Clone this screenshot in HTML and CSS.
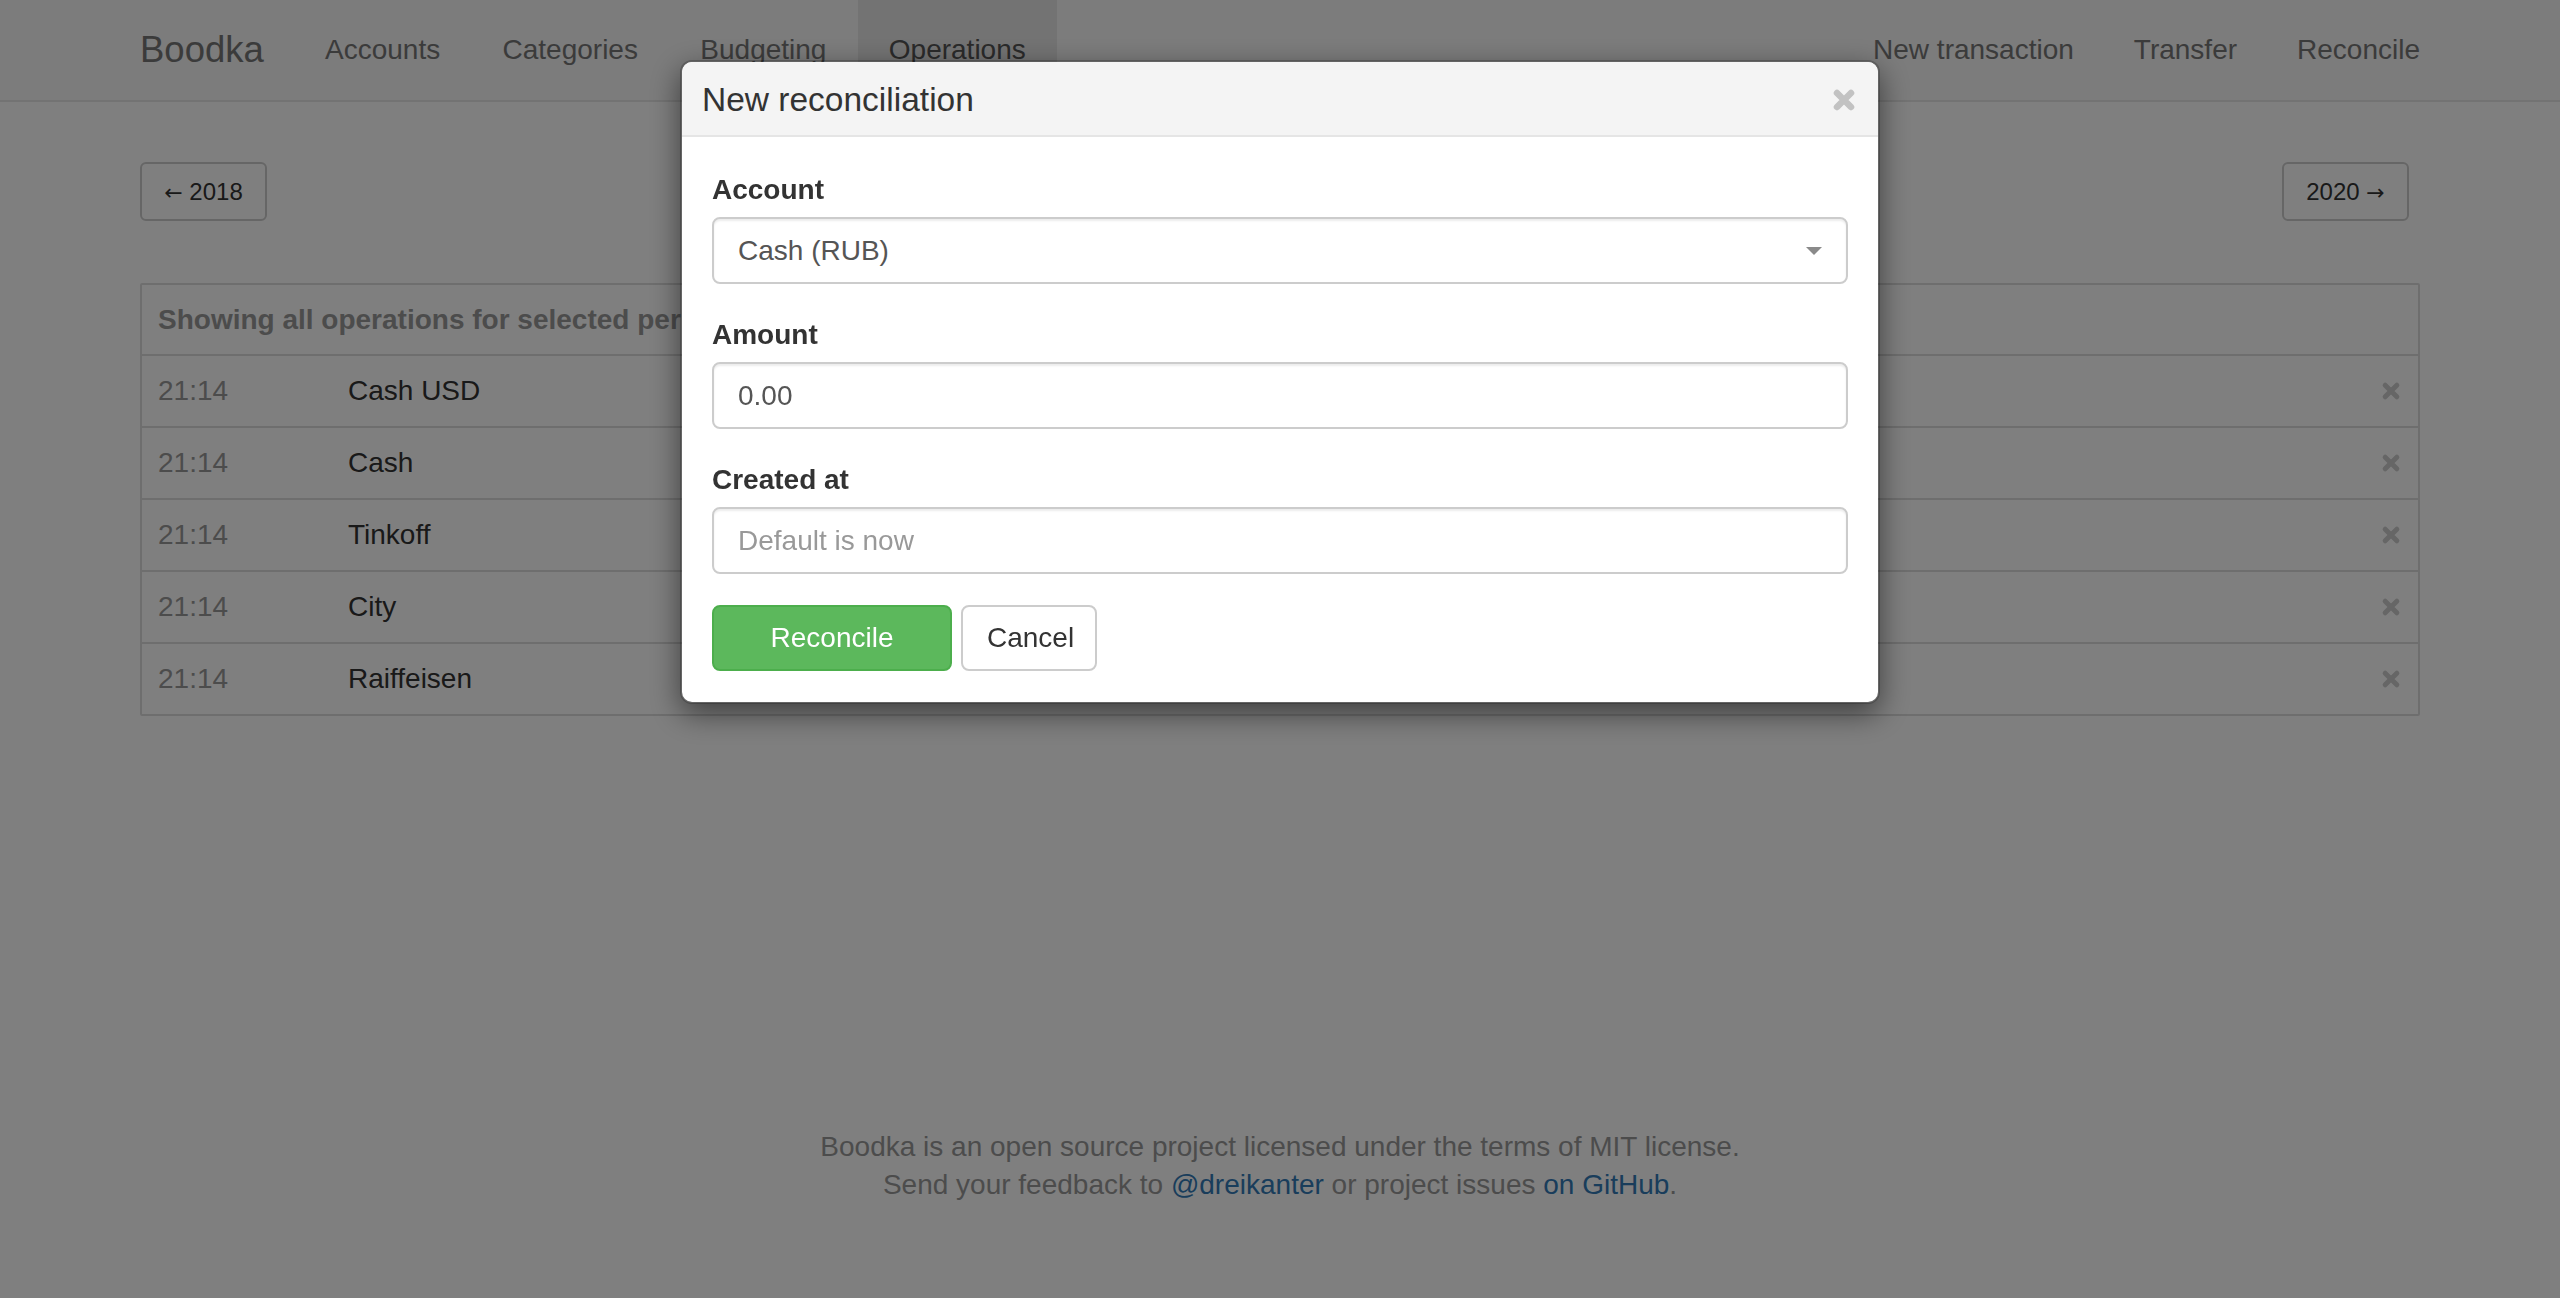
FILE: index.html
```html
<!DOCTYPE html>
<html lang="en">
<head>
<meta charset="utf-8">
<title>Boodka</title>
<link rel="stylesheet" href="styles.css">
</head>
<body>
<nav class="navbar">
  <div class="container nav-inner">
    <a class="brand" href="#">Boodka</a>
    <ul class="nav nav-left">
      <li><a href="#">Accounts</a></li>
      <li><a href="#">Categories</a></li>
      <li><a href="#">Budgeting</a></li>
      <li class="active"><a href="#">Operations</a></li>
    </ul>
    <ul class="nav nav-right">
      <li><a href="#">New transaction</a></li>
      <li><a href="#">Transfer</a></li>
      <li><a href="#">Reconcile</a></li>
    </ul>
  </div>
</nav>

<main class="container page">
  <div class="pager">
    <button class="btn-sm"><span class="arrow">&larr;</span> 2018</button>
    <button class="btn-sm btn-next">2020 <span class="arrow">&rarr;</span></button>
  </div>

  <div class="panel">
    <div class="panel-heading">Showing all operations for selected period</div>
    <div class="op-row"><span class="time">21:14</span><span class="name">Cash USD</span><span class="del"><svg viewBox="0 0 24 24"><path d="M5 5L19 19M19 5L5 19"/></svg></span></div>
    <div class="op-row"><span class="time">21:14</span><span class="name">Cash</span><span class="del"><svg viewBox="0 0 24 24"><path d="M5 5L19 19M19 5L5 19"/></svg></span></div>
    <div class="op-row"><span class="time">21:14</span><span class="name">Tinkoff</span><span class="del"><svg viewBox="0 0 24 24"><path d="M5 5L19 19M19 5L5 19"/></svg></span></div>
    <div class="op-row"><span class="time">21:14</span><span class="name">City</span><span class="del"><svg viewBox="0 0 24 24"><path d="M5 5L19 19M19 5L5 19"/></svg></span></div>
    <div class="op-row"><span class="time">21:14</span><span class="name">Raiffeisen</span><span class="del"><svg viewBox="0 0 24 24"><path d="M5 5L19 19M19 5L5 19"/></svg></span></div>
  </div>
</main>

<footer class="footer">
  <p>Boodka is an open source project licensed under the terms of MIT license.</p>
  <p>Send your feedback to <a href="#">@dreikanter</a> or project issues <a href="#">on GitHub</a>.</p>
</footer>

<div class="backdrop"></div>

<div class="modal-layer">
  <div class="modal">
    <div class="modal-header">
      <h4 class="modal-title">New reconciliation</h4>
      <span class="close"><svg viewBox="0 0 24 24"><path d="M5 5L19 19M19 5L5 19"/></svg></span>
    </div>
    <div class="modal-body">
      <div class="form-group">
        <label class="label">Account</label>
        <div class="select-wrap">
          <div class="form-control">Cash (RUB)</div>
          <span class="caret"></span>
        </div>
      </div>
      <div class="form-group">
        <label class="label">Amount</label>
        <div class="form-control">0.00</div>
      </div>
      <div class="form-group">
        <label class="label">Created at</label>
        <div class="form-control placeholder">Default is now</div>
      </div>
      <div class="actions">
        <button class="btn btn-success">Reconcile</button>
        <button class="btn btn-default">Cancel</button>
      </div>
    </div>
  </div>
</div>
</body>
</html>
```

FILE: styles.css
```css
* { box-sizing: border-box; }

html, body {
  margin: 0;
  padding: 0;
  background: #ffffff;
}

body {
  font-family: "Liberation Sans", Arial, Helvetica, sans-serif;
  font-size: 28px;
  line-height: 40px;
  color: #333333;
  height: 1298px;
  overflow: hidden;
}

a { text-decoration: none; }

.container {
  width: 2280px;
  margin: 0 auto;
}

/* ---------- navbar ---------- */
.navbar {
  background: #f8f8f8;
  border-bottom: 2px solid #e7e7e7;
  height: 102px;
}

.nav-inner {
  display: flex;
  align-items: stretch;
  height: 100px;
}

.brand {
  font-size: 36.5px;
  line-height: 40px;
  color: #777777;
  padding: 30px 30px 30px 0;
  height: 100px;
}

.nav {
  list-style: none;
  margin: 0;
  padding: 0;
  display: flex;
}

.nav li a {
  display: block;
  padding: 30px 30px;
  font-size: 28px;
  line-height: 40px;
  color: #777777;
  height: 100px;
}

.nav-left li a {
  padding: 30px 31.2px;
}

.nav li.active a {
  background: #e7e7e7;
  color: #555555;
}

.nav-right {
  margin-left: auto;
  margin-right: -30px;
}

/* ---------- page ---------- */
.page {
  padding-top: 60px;
}

.pager {
  display: flex;
  justify-content: space-between;
  align-items: center;
}

.btn-sm {
  font-family: inherit;
  font-size: 24px;
  line-height: 36px;
  padding: 10px 0;
  height: 59px;
  width: 127px;
  white-space: nowrap;
  text-align: center;
  border: 2px solid #cccccc;
  border-radius: 6px;
  background: #ffffff;
  color: #333333;
}

.arrow {
  font-family: "DejaVu Sans", sans-serif;
  font-size: 22px;
}

.btn-next {
  margin-right: 11px;
}

.panel {
  margin-top: 62px;
  border: 2px solid #dddddd;
  border-radius: 2px;
}

.panel-heading {
  height: 71px;
  padding: 0 16px;
  display: flex;
  align-items: center;
  font-weight: bold;
  color: #999999;
  border-bottom: 2px solid #dddddd;
}

.op-row {
  display: flex;
  align-items: center;
  height: 72px;
  padding: 0 16px;
  border-bottom: 2px solid #dddddd;
}

.op-row:last-child {
  border-bottom: none;
  height: 70px;
}

.time {
  width: 190px;
  color: #999999;
}

.name {
  flex: 1;
  color: #333333;
}

.del {
  width: 20px;
  height: 20px;
  margin-right: 1px;
  display: flex;
}

.del svg {
  width: 20px;
  height: 20px;
  fill: none;
  stroke: #cccccc;
  stroke-width: 6;
  stroke-linecap: round;
}

/* ---------- footer ---------- */
.footer {
  margin-top: 412px;
  text-align: center;
  color: #999999;
  line-height: 38px;
}

.footer p {
  margin: 0;
}

.footer a {
  color: #337ab7;
}

/* ---------- modal ---------- */
.backdrop {
  position: fixed;
  inset: 0;
  background: rgba(0, 0, 0, 0.5);
}

.modal-layer {
  position: fixed;
  inset: 0;
  display: flex;
  justify-content: center;
  align-items: flex-start;
  padding-top: 60px;
}

.modal {
  width: 1200px;
  background: #ffffff;
  border: 2px solid rgba(0, 0, 0, 0.2);
  border-radius: 12px;
  box-shadow: 0 10px 30px rgba(0, 0, 0, 0.5);
  background-clip: padding-box;
  overflow: hidden;
}

.modal-header {
  background: #f4f4f4;
  border-bottom: 2px solid #e5e5e5;
  height: 75px;
  padding: 0 22px 0 20px;
  display: flex;
  align-items: center;
  justify-content: space-between;
}

.modal-title {
  margin: 2px 0 0;
  font-size: 33.5px;
  font-weight: normal;
  line-height: 40px;
  color: #333333;
}

.close {
  width: 24px;
  height: 24px;
  display: flex;
  margin-top: 2px;
}

.close svg {
  width: 24px;
  height: 24px;
  fill: none;
  stroke: #c2c2c2;
  stroke-width: 6.5;
  stroke-linecap: round;
}

.modal-body {
  padding: 33px 30px 31px 30px;
}

.form-group {
  margin-bottom: 31px;
}

.label {
  display: block;
  font-weight: bold;
  line-height: 40px;
  margin-bottom: 7px;
  color: #333333;
}

.form-control {
  height: 67px;
  padding: 11px 24px;
  line-height: 41px;
  font-size: 28px;
  color: #555555;
  background: #ffffff;
  border: 2px solid #cccccc;
  border-radius: 8px;
  box-shadow: inset 0 2px 2px rgba(0, 0, 0, 0.075);
}

.placeholder {
  color: #999999;
}

.select-wrap {
  position: relative;
}

.caret {
  position: absolute;
  right: 26px;
  top: 30px;
  width: 0;
  height: 0;
  border-left: 8px solid transparent;
  border-right: 8px solid transparent;
  border-top: 8px solid #8a8a8a;
}

.actions {
  display: flex;
  gap: 9px;
}

.btn {
  font-family: inherit;
  font-size: 28px;
  line-height: 40px;
  height: 66px;
  padding: 11px 24px;
  border-radius: 8px;
  border: 2px solid transparent;
}

.btn-success {
  width: 240px;
  background: #5cb85c;
  border-color: #4cae4c;
  color: #ffffff;
}

.btn-default {
  width: 136px;
  background: #ffffff;
  border-color: #cccccc;
  color: #333333;
}
```
